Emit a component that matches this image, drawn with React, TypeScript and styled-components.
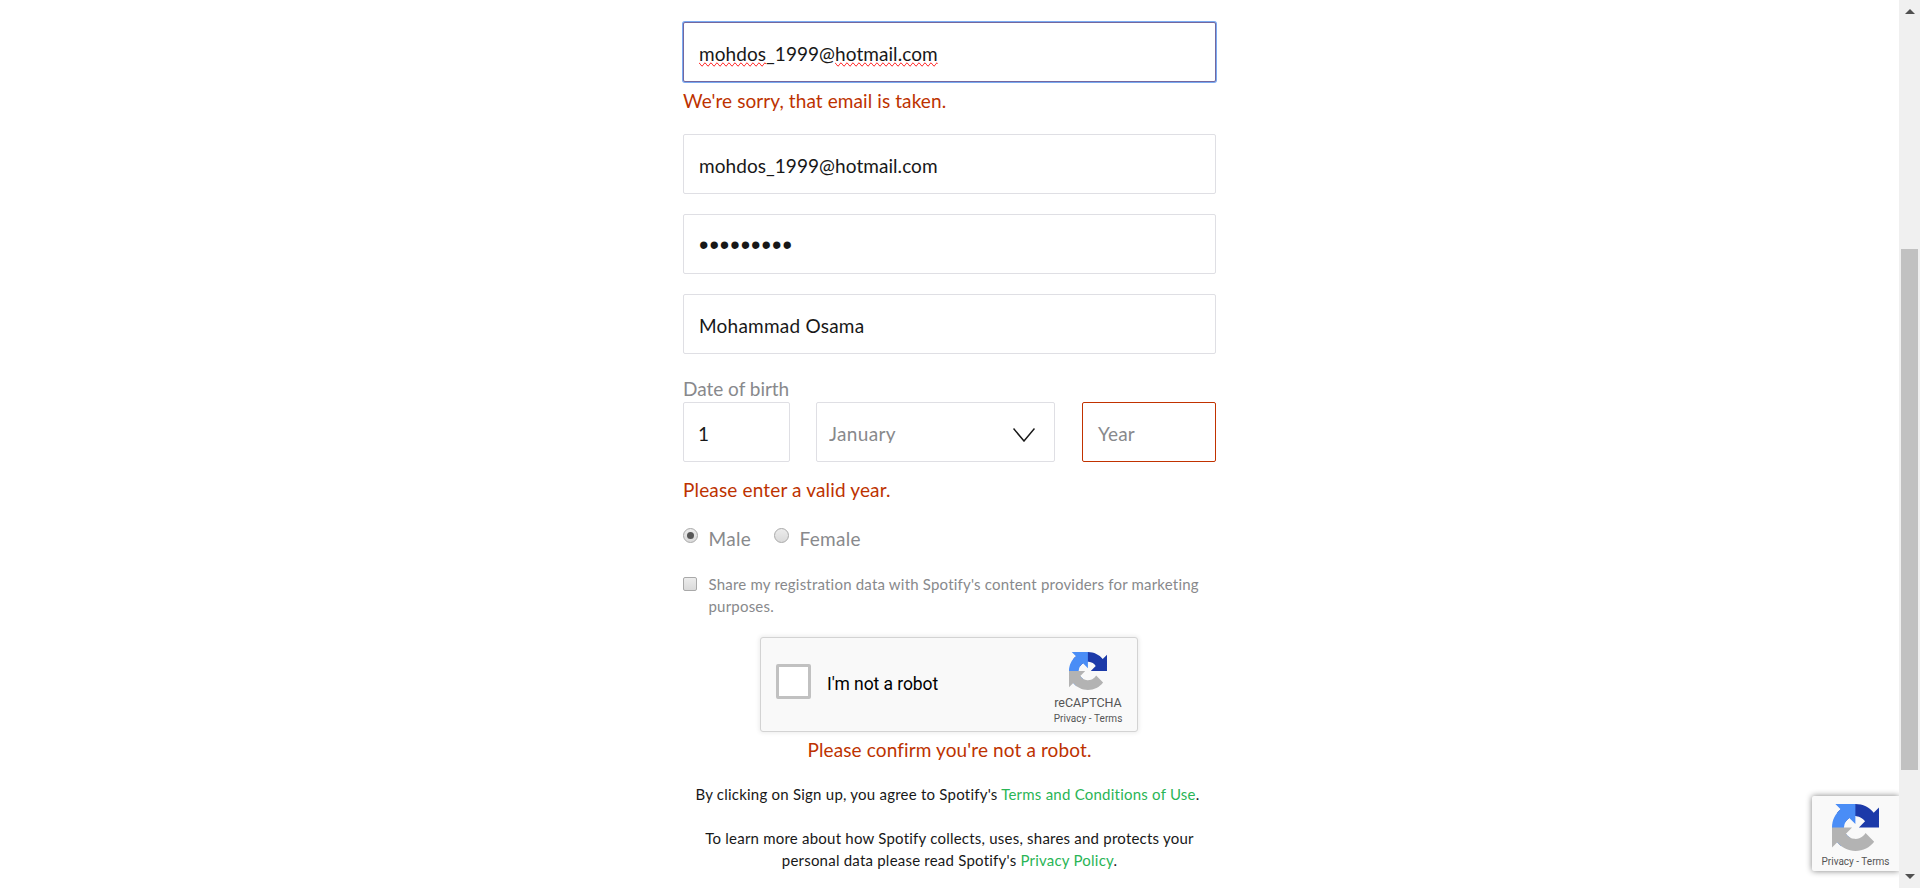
import React from "react";
import styled, { createGlobalStyle, css } from "styled-components";

const GlobalStyle = createGlobalStyle`
  *, *::before, *::after { box-sizing: border-box; }
  body { margin: 0; background: #fff; overflow: hidden; }
`;

const Page = styled.div`
  display: flex;
  width: 1920px;
  height: 888px;
  overflow: hidden;
  position: relative;
  background: #fff;
  color: #181818;
  font-family: Lato, "Liberation Sans", sans-serif;
  font-size: 19px;
`;

const Content = styled.main`
  flex: 1;
  display: flex;
  justify-content: center;
  padding-top: 22px;
`;

const Form = styled.form`
  width: 533px;
  display: flex;
  flex-direction: column;
`;

const Text = styled.span<{ $track?: number }>`
  white-space: nowrap;
  letter-spacing: ${(p) => p.$track ?? 0}px;
`;

const Misspelled = styled.span`
  text-decoration-line: spelling-error;
`;

const Field = styled.div<{ $state?: "focus" | "error"; $width?: number; $pad?: number }>`
  display: flex;
  align-items: center;
  flex: none;
  width: ${(p) => (p.$width ? `${p.$width}px` : "100%")};
  height: 60px;
  padding: 2px ${(p) => p.$pad ?? 15}px 0;
  border: 1px solid ${(p) => (p.$state === "error" ? "#c13200" : "#dfdfe4")};
  border-radius: 2px;
  background: #fff;
  ${(p) =>
    p.$state === "focus" &&
    css`
      border-color: #73689f;
      box-shadow: 0 0 0 1px #7aaaf2;
    `}
`;

const FieldStack = styled.div`
  display: flex;
  flex-direction: column;
  gap: 20px;
`;

const Dots = styled.span`
  font-family: "Liberation Sans", Arial, sans-serif;
  font-size: 27px;
  letter-spacing: 0.97px;
  line-height: 30px;
`;

const ErrorText = styled.p<{ $height: number; $top?: number; $bottom?: number; $center?: boolean }>`
  margin: ${(p) => p.$top ?? 0}px 0 ${(p) => p.$bottom ?? 0}px;
  height: ${(p) => p.$height}px;
  line-height: ${(p) => p.$height}px;
  text-align: ${(p) => (p.$center ? "center" : "left")};
  color: #bd3200;
`;

const Label = styled.label`
  margin-top: 22px;
  line-height: 26px;
  color: #88898c;
`;

const DateRow = styled.div`
  display: flex;
  gap: 26px;
`;

const YearField = styled(Field)`
  margin-left: 1px;
`;

const Muted = styled.span`
  flex: 1;
  color: #88898c;
`;

const MonthValue = styled(Muted)`
  height: 25px;
  line-height: 32px;
  margin-top: -6px;
  overflow: hidden;
`;

const Chevron = styled.svg`
  margin: 3px 7px 0 0;
`;

const RadioRow = styled.div`
  display: flex;
  margin-top: 20px;
  height: 29px;
  line-height: 29px;
  color: #88898c;
`;

const RadioOption = styled.label<{ $width: number }>`
  display: flex;
  width: ${(p) => p.$width}px;
  gap: 10.5px;
`;

const Radio = styled.span<{ $checked?: boolean }>`
  display: flex;
  align-items: center;
  justify-content: center;
  width: 15px;
  height: 15px;
  margin-top: 4px;
  border: 1px solid #a9a9a9;
  border-radius: 50%;
  background: linear-gradient(#ececec, #dadada);
  &::after {
    content: "";
    width: 7px;
    height: 7px;
    border-radius: 50%;
    background: ${(p) => (p.$checked ? "#575757" : "transparent")};
  }
`;

const ShareRow = styled.label`
  display: flex;
  gap: 11.5px;
  margin-top: 20px;
  height: 44px;
  font-size: 15px;
  line-height: 22px;
  color: #88898c;
`;

const Checkbox = styled.span`
  width: 14px;
  height: 14px;
  margin-top: 4px;
  border: 1px solid #a9a9a9;
  border-radius: 2px;
  background: linear-gradient(#ececec, #dadada);
`;

const Captcha = styled.div`
  align-self: center;
  display: flex;
  width: 378px;
  height: 95px;
  margin: 20px 0 0 -1px;
  padding: 0 15px 0 15px;
  border: 1px solid #d3d3d3;
  border-radius: 3px;
  background: #f9f9f9;
  box-shadow: 0 0 4px 1px rgba(0, 0, 0, 0.08);
  font-family: Roboto, "Liberation Sans", sans-serif;
`;

const CaptchaBox = styled.span`
  width: 35px;
  height: 35px;
  margin-top: 26px;
  border: 2px solid #c1c1c1;
  outline: 1px solid #c1c1c1;
  outline-offset: -3px;
  border-radius: 2px;
  background: #fff;
`;

const CaptchaLabel = styled.span`
  flex: 1;
  margin: 34px 0 0 16px;
  font-size: 17.5px;
  line-height: 24px;
  color: #000;
`;

const CaptchaBrand = styled.div`
  display: flex;
  flex-direction: column;
  align-items: center;
  width: 68px;
  padding-top: 14px;
  color: #555;
`;

const BrandName = styled.span`
  margin-top: 5px;
  font-size: 12.5px;
  line-height: 16px;
`;

const BrandLinks = styled.span<{ $top: number }>`
  margin-top: ${(p) => p.$top}px;
  font-size: 10px;
  line-height: 14px;
`;

const Legal = styled.p<{ $top: number }>`
  margin: ${(p) => p.$top}px 0 0;
  font-size: 15px;
  line-height: 22px;
  text-align: center;
`;

const Link = styled.a`
  color: #2ab556;
`;

const Badge = styled.aside`
  position: absolute;
  right: 21px;
  top: 796px;
  width: 87px;
  height: 75px;
  display: flex;
  flex-direction: column;
  align-items: center;
  padding: 8px 0 0;
  border-radius: 2px 0 0 2px;
  background: #f9f9f9;
  box-shadow: 0 0 6px gray;
  font-family: Roboto, "Liberation Sans", sans-serif;
  color: #555;
`;

const Scrollbar = styled.div`
  position: relative;
  display: flex;
  flex-direction: column;
  align-items: center;
  justify-content: space-between;
  width: 21px;
  padding: 9px 0;
  background: #f0f0f0;
`;

const Thumb = styled.div`
  width: 17px;
  height: 521px;
  margin: 235px 0 104px;
  background: #c1c1c1;
`;

const CaptchaLogo = ({ size }: { size: number }) => (
  <svg width={size} height={size} viewBox="0 0 64 64">
    <path fill="#1c3aa9" d="M64 31.955l-.033-1.37V4.687l-7.16 7.16C50.948 4.674 42.033.093 32.05.093c-10.4 0-19.622 4.96-25.458 12.64l11.736 11.86a15.55 15.55 0 0 1 4.754-5.334c2.05-1.6 4.952-2.906 8.968-2.906.485 0 .86.057 1.135.163 4.976.393 9.288 3.14 11.828 7.124l-8.307 8.307L64 31.953" />
    <path fill="#4a8df6" d="M31.862.094l-1.37.033H4.594l7.16 7.16C4.58 13.147 0 22.06 0 32.046c0 10.4 4.96 19.622 12.64 25.458L24.5 45.768a15.55 15.55 0 0 1-5.334-4.754c-1.6-2.05-2.906-4.952-2.906-8.968 0-.485.057-.86.163-1.135.393-4.976 3.14-9.288 7.124-11.828l8.307 8.307L31.86.095" />
    <path fill="#b3b3b3" d="M.001 32.045l.033 1.37v25.898l7.16-7.16c5.86 7.173 14.774 11.754 24.76 11.754 10.4 0 19.622-4.96 25.458-12.64l-11.736-11.86a15.55 15.55 0 0 1-4.754 5.334c-2.05 1.6-4.952 2.906-8.968 2.906-.485 0-.86-.057-1.135-.163-4.976-.393-9.288-3.14-11.828-7.124l8.307-8.307L.002 32.047" />
  </svg>
);

const ScrollArrow = ({ up }: { up?: boolean }) => (
  <svg width="10" height="5" viewBox="0 0 10 5">
    <path fill="#505050" d={up ? "M5 0l5 5H0z" : "M0 0h10L5 5z"} />
  </svg>
);

export default function App() {
  return (
    <Page>
      <GlobalStyle />
      <Content>
        <Form>
          <Field $state="focus">
            <Text $track={0.06}>
              <Misspelled>mohdos</Misspelled>_1999@<Misspelled>hotmail.com</Misspelled>
            </Text>
          </Field>
          <ErrorText $height={38} $bottom={14}>
            <Text $track={0.09}>We're sorry, that email is taken.</Text>
          </ErrorText>
          <FieldStack>
            <Field>
              <Text $track={0.06}>mohdos_1999@hotmail.com</Text>
            </Field>
            <Field>
              <Dots>•••••••••</Dots>
            </Field>
            <Field>
              <Text $track={0.23}>Mohammad Osama</Text>
            </Field>
          </FieldStack>
          <Label>
            <Text $track={-0.02}>Date of birth</Text>
          </Label>
          <DateRow>
            <Field $width={107} $pad={14}>
              <Text>1</Text>
            </Field>
            <Field $width={239} $pad={12}>
              <MonthValue>
                <Text $track={0.36}>January</Text>
              </MonthValue>
              <Chevron width="22" height="14" viewBox="0 0 22 14" fill="none" stroke="#181818" strokeWidth="1.5">
                <path d="M0.5 0.5L11 13L21.5 0.5" />
              </Chevron>
            </Field>
            <YearField $state="error" $width={134}>
              <Muted>
                <Text $track={0.2}>Year</Text>
              </Muted>
            </YearField>
          </DateRow>
          <ErrorText $height={28} $top={14}>
            <Text $track={0.15}>Please enter a valid year.</Text>
          </ErrorText>
          <RadioRow>
            <RadioOption $width={91}>
              <Radio $checked />
              <Text $track={0.3}>Male</Text>
            </RadioOption>
            <RadioOption $width={100}>
              <Radio />
              <Text $track={0.3}>Female</Text>
            </RadioOption>
          </RadioRow>
          <ShareRow>
            <Checkbox />
            <Text $track={0.2}>
              Share my registration data with Spotify's content providers for marketing
              <br />
              purposes.
            </Text>
          </ShareRow>
          <Captcha>
            <CaptchaBox />
            <CaptchaLabel>
              <Text $track={-0.07}>I'm not a robot</Text>
            </CaptchaLabel>
            <CaptchaBrand>
              <CaptchaLogo size={38} />
              <BrandName>reCAPTCHA</BrandName>
              <BrandLinks $top={1}>
                <Text $track={0.05}>Privacy - Terms</Text>
              </BrandLinks>
            </CaptchaBrand>
          </Captcha>
          <ErrorText $height={35} $center>
            <Text $track={0.12}>Please confirm you're not a robot.</Text>
          </ErrorText>
          <Legal $top={16}>
            <Text $track={0.23}>
              By clicking on Sign up, you agree to Spotify's <Link>Terms and Conditions of Use</Link>.{"\u00a0"}
            </Text>
          </Legal>
          <Legal $top={22}>
            <Text $track={0.22}>
              To learn more about how Spotify collects, uses, shares and protects your
              <br />
              personal data please read Spotify's <Link>Privacy Policy</Link>.
            </Text>
          </Legal>
        </Form>
      </Content>
      <Badge>
        <CaptchaLogo size={47} />
        <BrandLinks $top={4}>
          <Text>Privacy - Terms</Text>
        </BrandLinks>
      </Badge>
      <Scrollbar>
        <ScrollArrow up />
        <Thumb />
        <ScrollArrow />
      </Scrollbar>
    </Page>
  );
}
